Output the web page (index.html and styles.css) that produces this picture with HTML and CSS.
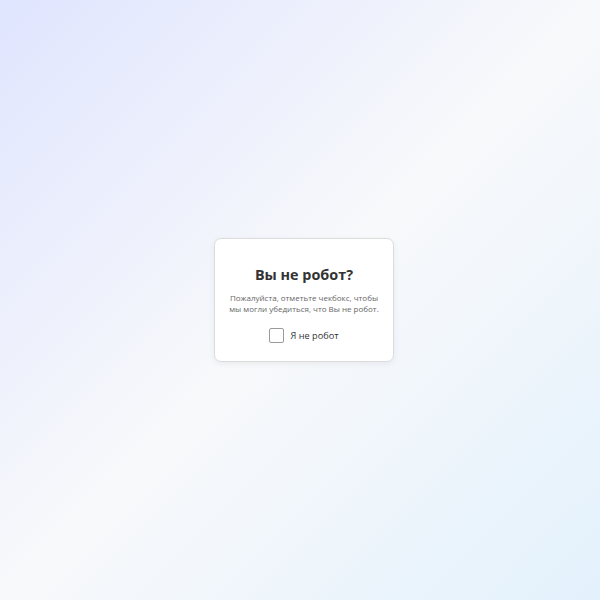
FILE: index.html
```html
<!DOCTYPE html>
<html lang="ru">
<head>
  <meta charset="UTF-8">
  <meta name="viewport" content="width=device-width, initial-scale=1.0">
  <title>Проверка</title>
  <link rel="stylesheet" href="styles.css">
</head>
<body>
  <div class="captcha-box">
    <h1>Вы не робот?</h1>
    <p class="hint">Пожалуйста, отметьте чекбокс, чтобы мы могли убедиться, что Вы не робот.</p>
    <label class="check-row">
      <input type="checkbox" class="check">
      <span>Я не робот</span>
    </label>
  </div>
</body>
</html>
```

FILE: styles.css
```css
html, body {
  height: 100%;
}
body {
  font-family: 'Open Sans', 'Noto Sans', Arial, sans-serif;
  background: linear-gradient(135deg, #dfe5fe 0%, #f8f9fb 50%, #e3f1fc 100%);
  color: #333;
  margin: 0;
  padding-left: 8px;
  box-sizing: border-box;
  display: flex;
  justify-content: center;
  align-items: center;
}
.captcha-box {
  width: 150px;
  background: #ffffff;
  border: 1px solid #dcdcdc;
  border-radius: 7px;
  box-shadow: 0 2px 6px rgba(0, 0, 0, 0.06);
  padding: 26px 14px 18px;
  text-align: center;
}
h1 {
  font-size: 14.4px;
  font-weight: 700;
  color: #333;
  margin: 0 0 7px;
  line-height: 20px;
}
.hint {
  font-size: 8px;
  line-height: 11px;
  color: #666;
  margin: 0 0 14px;
}
.check-row {
  display: flex;
  justify-content: center;
  align-items: center;
  gap: 6px;
  height: 15px;
  font-size: 9.2px;
  color: #333;
}
.check {
  appearance: none;
  width: 15px;
  height: 15px;
  margin: 0;
  border: 1px solid #9a9a9a;
  border-radius: 2px;
  background: #fff;
}
```
